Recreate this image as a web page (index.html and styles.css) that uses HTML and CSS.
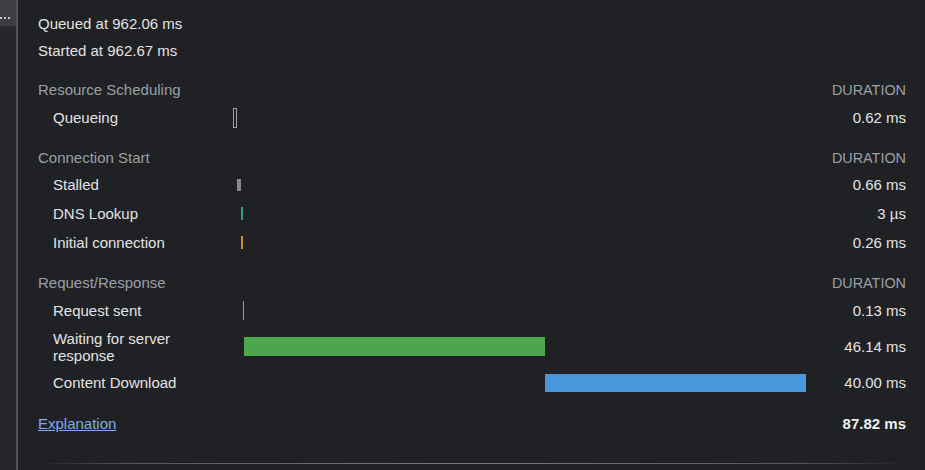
FILE: index.html
```html
<!DOCTYPE html>
<html>
<head>
<meta charset="utf-8">
<link rel="stylesheet" href="styles.css">
</head>
<body>
<div class="sidebar">
  <div class="sidebar-tab"><span class="dot"></span><span class="dot"></span><span class="dot"></span></div>
</div>
<main class="timing">
  <div class="info">Queued at 962.06 ms</div>
  <div class="info">Started at 962.67 ms</div>

  <div class="row header"><span class="label">Resource Scheduling</span><span class="dur-head">DURATION</span></div>
  <div class="row"><span class="label sub">Queueing</span><span class="track"><span class="bar queueing" style="margin-left:0;width:4px"></span></span><span class="dur">0.62 ms</span></div>

  <div class="row header compact"><span class="label">Connection Start</span><span class="dur-head">DURATION</span></div>
  <div class="row"><span class="label sub">Stalled</span><span class="track"><span class="bar thin stalled" style="margin-left:4px;width:4px"></span></span><span class="dur">0.66 ms</span></div>
  <div class="row"><span class="label sub">DNS Lookup</span><span class="track"><span class="bar thin dns" style="margin-left:8px;width:2px"></span></span><span class="dur">3 µs</span></div>
  <div class="row"><span class="label sub">Initial connection</span><span class="track"><span class="bar thin connecting" style="margin-left:8px;width:2px"></span></span><span class="dur">0.26 ms</span></div>

  <div class="row header"><span class="label">Request/Response</span><span class="dur-head">DURATION</span></div>
  <div class="row"><span class="label sub">Request sent</span><span class="track"><span class="bar sending" style="margin-left:10px;width:1px"></span></span><span class="dur">0.13 ms</span></div>
  <div class="row tall"><span class="label sub">Waiting for server<br>response</span><span class="track"><span class="bar waiting" style="margin-left:11px;width:301px"></span></span><span class="dur">46.14 ms</span></div>
  <div class="row"><span class="label sub">Content Download</span><span class="track"><span class="bar receiving" style="margin-left:312px;width:261px"></span></span><span class="dur">40.00 ms</span></div>

  <div class="row total"><a class="link" href="#">Explanation</a><span class="dur bold">87.82 ms</span></div>
  <div class="divider"></div>
</main>
</body>
</html>
```

FILE: styles.css
```css
html, body {
  margin: 0;
  padding: 0;
}
body {
  width: 925px;
  height: 470px;
  overflow: hidden;
  background: #202124;
  display: flex;
  font-family: "Liberation Sans", Arial, sans-serif;
  font-size: 15px;
  color: #e3e3e3;
}
.sidebar {
  width: 16px;
  flex: none;
  background: #26272a;
  border-right: 2px solid #505154;
}
.sidebar-tab {
  height: 26px;
  background: #3d3e41;
  display: flex;
  align-items: flex-start;
  gap: 2px;
  padding-top: 17px;
  box-sizing: border-box;
}
.dot {
  width: 2px;
  height: 2px;
  background: #c8c8c8;
}
.timing {
  flex: 1;
  padding: 10px 19px 0 20px;
  display: flex;
  flex-direction: column;
}
.info {
  line-height: 27px;
  height: 27px;
}
.row {
  display: grid;
  grid-template-columns: 195px 573px 1fr;
  height: 29px;
  line-height: 29px;
  align-items: center;
}
.row.header {
  height: 27px;
  line-height: 27px;
  margin-top: 12px;
  grid-template-columns: 1fr auto;
  align-items: baseline;
}
.row.header.compact {
  height: 26px;
}
.row.header .label {
  color: #9aa0a6;
}
.dur-head {
  font-size: 14.4px;
  color: #9aa0a6;
  text-align: right;
}
.label {
  white-space: nowrap;
}
.label.sub {
  padding-left: 15px;
}
.row.tall {
  height: 43px;
}
.row.tall .label {
  line-height: 17px;
}
.track {
  display: flex;
  align-items: center;
  height: 100%;
}
.bar {
  display: block;
  height: 19px;
  flex: none;
  box-sizing: border-box;
}
.bar.thin {
  height: 13px;
}
.bar.queueing {
  height: 20px;
  border: 1px solid #a0a3a6;
  background: transparent;
}
.bar.stalled {
  height: 12px;
  background: #888888;
}
.bar.dns {
  background: #2f9e8f;
}
.bar.connecting {
  background: #d4891f;
}
.bar.sending {
  background: #8b9ca3;
}
.bar.waiting {
  background: #4ca64e;
}
.bar.receiving {
  height: 18px;
  background: #4996da;
}
.dur {
  text-align: right;
}
.row.total {
  margin-top: 12px;
  grid-template-columns: 1fr auto;
}
.link {
  color: #7cacf8;
  text-decoration: underline;
}
.bold {
  font-weight: bold;
  color: #f0f0f0;
}
.divider {
  margin-top: 25px;
  height: 1px;
  background: linear-gradient(to right, rgba(120,120,120,0) 0%, #555 10%, #7a7a7a 50%, #555 88%, rgba(120,120,120,0) 100%);
}
```
